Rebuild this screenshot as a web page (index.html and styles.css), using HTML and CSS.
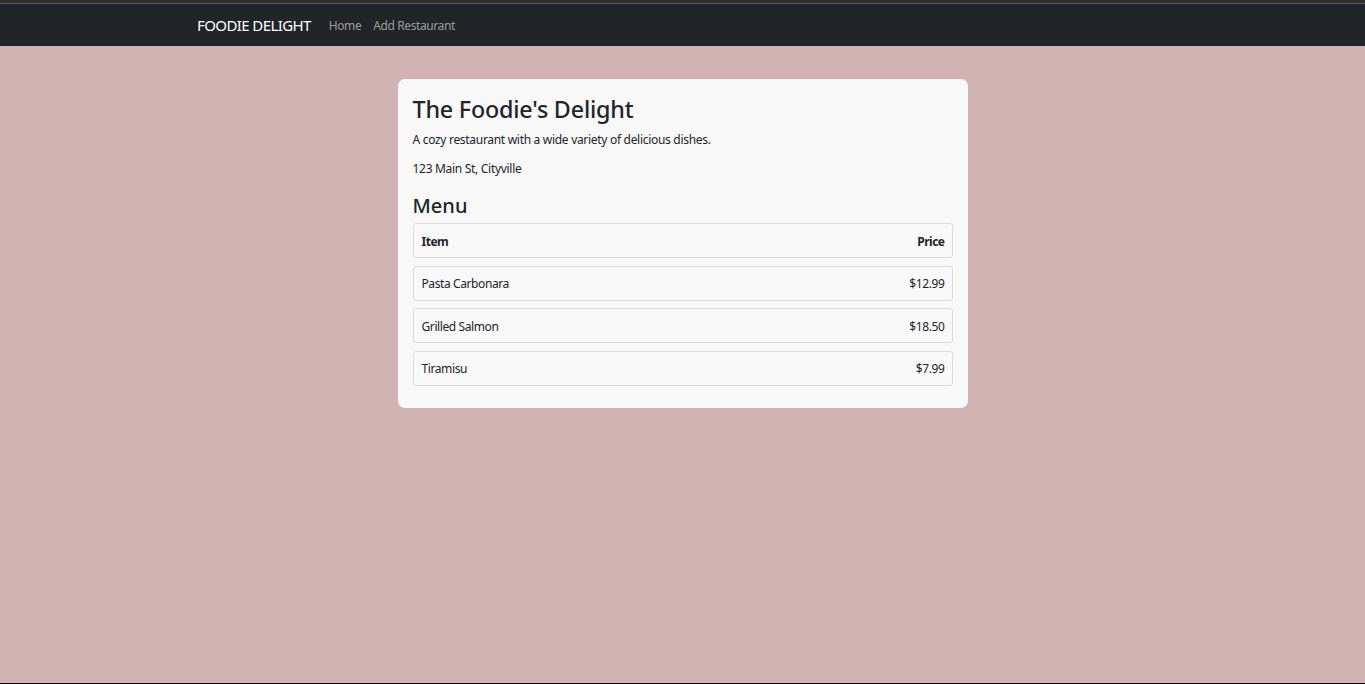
FILE: index.html
```html
<!DOCTYPE html>
<html>
<head>
<meta charset="utf-8">
<link rel="stylesheet" href="styles.css">
</head>
<body>
<div class="topline"></div>
<nav class="navbar">
  <div class="nav-inner">
    <a class="brand" href="#">FOODIE DELIGHT</a>
    <a class="nav-link" href="#">Home</a>
    <a class="nav-link" href="#">Add Restaurant</a>
  </div>
</nav>
<main class="main">
  <section class="card">
    <h1 class="title">The Foodie's Delight</h1>
    <p class="desc">A cozy restaurant with a wide variety of delicious dishes.</p>
    <p class="addr">123 Main St, Cityville</p>
    <h2 class="menu-title">Menu</h2>
    <div class="menu">
      <div class="row head"><span>Item</span><span>Price</span></div>
      <div class="row"><span>Pasta Carbonara</span><span>$12.99</span></div>
      <div class="row"><span>Grilled Salmon</span><span>$18.50</span></div>
      <div class="row"><span>Tiramisu</span><span>$7.99</span></div>
    </div>
  </section>
</main>
<div class="bottomline"></div>
</body>
</html>
```
FILE: styles.css
```css
* { box-sizing: border-box; }
html, body { height: 100%; }
body {
  margin: 0;
  font-family: "Noto Sans", "Open Sans", sans-serif;
  background: #d1b3b4;
  color: #212529;
  display: flex;
  flex-direction: column;
}
.topline {
  height: 4px;
  background: #2e2e2e;
  border-bottom: 1px solid #5a5a5a;
}
.navbar {
  background: #212529;
  height: 42px;
  display: flex;
  align-items: center;
}
.nav-inner {
  padding-left: 197px;
  display: flex;
  align-items: center;
  gap: 12px;
}
.brand {
  color: #fff;
  text-decoration: none;
  font-size: 15px;
  margin-right: 6px;
  letter-spacing: -0.6px;
}
.nav-link {
  color: rgba(255,255,255,0.55);
  text-decoration: none;
  font-size: 12px;
  letter-spacing: -0.4px;
}
.main {
  flex: 1;
  display: flex;
  justify-content: center;
  padding-top: 33px;
}
.card {
  width: 570px;
  align-self: flex-start;
  background: #f8f8f8;
  border-radius: 7px;
  padding: 15px 15px 22.5px;
}
.title {
  margin: 0;
  font-size: 23.3px;
  font-weight: 500;
  line-height: 30px;
  letter-spacing: -0.2px;
}
.desc {
  margin: 7px 0 0;
  font-size: 12px;
  line-height: 18px;
  letter-spacing: -0.3px;
}
.addr {
  margin: 11px 0 0;
  font-size: 12px;
  line-height: 18px;
  letter-spacing: -0.3px;
}
.menu-title {
  margin: 15px 0 4px;
  font-size: 20px;
  font-weight: 500;
  line-height: 26px;
}
.menu {
  display: flex;
  flex-direction: column;
  gap: 7.5px;
}
.row {
  height: 35px;
  border: 1px solid #dcdcdc;
  border-radius: 3px;
  display: flex;
  align-items: center;
  justify-content: space-between;
  padding: 1px 7px 0 8px;
  font-size: 12px;
  letter-spacing: -0.4px;
}
.row.head { font-weight: 700; letter-spacing: -0.5px; }
.bottomline {
  height: 1px;
  background: #000;
}
```
